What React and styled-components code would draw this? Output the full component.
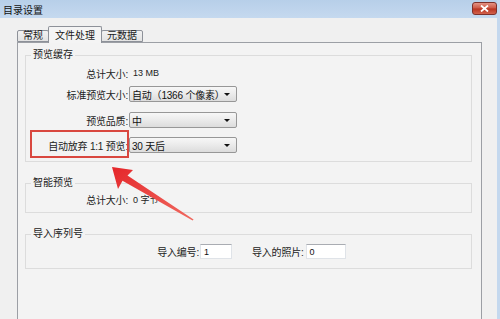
import React from "react";
import styled, { createGlobalStyle } from "styled-components";

const GlobalStyle = createGlobalStyle`
  html, body {
    margin: 0;
    padding: 0;
    background: #f0f0f0;
  }
  * {
    box-sizing: border-box;
  }
`;

const FONT = `"Liberation Sans", "Noto Sans CJK SC", sans-serif`;

export default function App() {
  return (
    <>
      <GlobalStyle />
      <Window>
        <TitleBar>
          <Title>目录设置</Title>
          <CloseButton>
            <svg width="9" height="7" viewBox="0 0 9 7">
              <path d="M1 0.5 L8 6.5 M8 0.5 L1 6.5" stroke="#fff" strokeWidth="1.8" />
            </svg>
          </CloseButton>
        </TitleBar>
        <Body>
          <TabRow>
            <Tab>常规</Tab>
            <Tab $active>文件处理</Tab>
            <Tab>元数据</Tab>
          </TabRow>
          <Panel>
            <Group>
              <Legend>预览缓存</Legend>
              <Row $top={3}>
                <Label>总计大小:</Label>
                <Value>13 MB</Value>
              </Row>
              <Row $top={5}>
                <Label>标准预览大小:</Label>
                <Select>自动（1366 个像素）</Select>
              </Row>
              <Row $top={10}>
                <Label>预览品质:</Label>
                <Select>中</Select>
              </Row>
              <Row $top={9}>
                <Label>自动放弃 1:1 预览:</Label>
                <Select>30 天后</Select>
              </Row>
            </Group>

            <Group $bottom={6}>
              <Legend>智能预览</Legend>
              <Row $top={2} $h={14}>
                <Label>总计大小:</Label>
                <Value>0 字节</Value>
              </Row>
            </Group>

            <Group $bottom={9}>
              <Legend>导入序列号</Legend>
              <ImportRow>
                <Label>导入编号:</Label>
                <TextInput $w={32}>1</TextInput>
                <SmallLabel>导入的照片:</SmallLabel>
                <TextInput $w={40}>0</TextInput>
              </ImportRow>
            </Group>
          </Panel>
        </Body>

        <Highlight />
        <Arrow viewBox="0 0 500 319" width="500" height="319">
          <defs>
            <linearGradient id="arrowFill" x1="0" y1="0" x2="1" y2="1">
              <stop offset="0" stopColor="#e5262a" />
              <stop offset="1" stopColor="#f06a60" />
            </linearGradient>
          </defs>
          <polygon
            points="112,167 133,170 127.5,175.5 193.6,219.4 192.6,220.6 122.5,180.8 118,189"
            fill="url(#arrowFill)"
          />
        </Arrow>
      </Window>
    </>
  );
}

const Window = styled.div`
  position: relative;
  width: 500px;
  height: 319px;
  display: flex;
  flex-direction: column;
  overflow: hidden;
  background: #f0f0f0;
  border-right: 3px solid #c4d8ee;
  font-family: ${FONT};
  font-size: 10px;
  color: #1a1a1a;
`;

const TitleBar = styled.div`
  height: 18px;
  flex: none;
  display: flex;
  align-items: center;
  justify-content: space-between;
  padding: 0 0 0 3px;
  background: linear-gradient(#b7cfe9, #c5d9ef);
`;

const Title = styled.span`
  font-size: 10px;
  color: #111;
`;

const CloseButton = styled.div`
  flex: none;
  width: 25px;
  height: 13px;
  margin-top: -1px;
  display: flex;
  align-items: center;
  justify-content: center;
  border: 1px solid #7e302a;
  border-radius: 3px;
  background: linear-gradient(#e49384, #cc5643 48%, #b8321f 52%, #d2624c);
`;

const Body = styled.div`
  flex: 1;
  display: flex;
  flex-direction: column;
  padding: 8px 15px 0 17px;
`;

const TabRow = styled.div`
  height: 16px;
  display: flex;
  align-items: flex-end;
  position: relative;
  z-index: 1;
`;

const Tab = styled.div`
  height: ${(p) => (p.$active ? "17px" : "12px")};
  margin-bottom: ${(p) => (p.$active ? "-1px" : "0")};
  margin-left: ${(p) => (p.$active ? "-1px" : "0")};
  margin-right: ${(p) => (p.$active ? "-1px" : "0")};
  padding: ${(p) => (p.$active ? "2px 6px 0" : "0 5px")};
  display: flex;
  align-items: center;
  border: 1px solid #8d9199;
  border-bottom: ${(p) => (p.$active ? "none" : "1px solid #8d9199")};
  border-radius: 2px 2px 0 0;
  background: ${(p) =>
    p.$active ? "#f4f4f4" : "linear-gradient(#f2f2f2, #e3e3e3)"};
  font-size: 10px;
  line-height: 1;
  white-space: nowrap;
  position: relative;
  z-index: ${(p) => (p.$active ? 2 : 1)};
`;

const Panel = styled.div`
  flex: 1;
  display: flex;
  flex-direction: column;
  gap: 14px;
  padding: 5px 9px 0 7px;
  border: 1px solid #9c9fa5;
  border-bottom: none;
  background: #f3f3f3;
`;

const Group = styled.fieldset`
  margin: 0;
  padding: 0 8px ${(p) => p.$bottom ?? 8}px 5px;
  border: 1px solid #dcdcdc;
  border-radius: 0;
  display: flex;
  flex-direction: column;
  min-width: 0;
`;

const Legend = styled.legend`
  padding: 0 2px;
  font-size: 10px;
  line-height: 14px;
  color: #222;
`;

const Row = styled.div`
  margin-top: ${(p) => p.$top}px;
  height: ${(p) => p.$h ?? 16}px;
  display: grid;
  grid-template-columns: 97px auto;
  column-gap: 1px;
  align-items: center;
`;

const Label = styled.span`
  justify-self: end;
  text-align: right;
  white-space: nowrap;
  font-size: 10px;
  letter-spacing: -0.2px;
  color: #222;
`;

const SmallLabel = styled(Label)`
  margin-left: 20px;
  margin-right: 1px;
`;

const Value = styled.span`
  padding-left: 4px;
  font-size: 9px;
  color: #222;
`;

const Select = styled.div`
  position: relative;
  width: 108px;
  height: 16px;
  display: flex;
  align-items: center;
  padding-left: 2px;
  border: 1px solid #979797;
  border-radius: 2px;
  background: linear-gradient(#f7f7f7, #ececec 45%, #dcdcdc);
  font-size: 10px;
  letter-spacing: -0.2px;
  white-space: nowrap;
  color: #111;

  &::after {
    content: "";
    position: absolute;
    right: 6px;
    top: 6px;
    border-left: 3px solid transparent;
    border-right: 3px solid transparent;
    border-top: 3px solid #111;
  }
`;

const ImportRow = styled.div`
  margin-top: 3px;
  height: 15px;
  display: grid;
  grid-template-columns: 168px auto auto auto;
  justify-content: start;
  align-items: center;
`;

const TextInput = styled.div`
  width: ${(p) => p.$w}px;
  height: 15px;
  display: flex;
  align-items: center;
  padding-left: 3px;
  margin-left: 1px;
  background: #fff;
  border: 1px solid #dfe3e8;
  border-top-color: #a9acb2;
  font-size: 9px;
  color: #111;
`;

const Highlight = styled.div`
  position: absolute;
  left: 30px;
  top: 130px;
  width: 99px;
  height: 28px;
  border: 2px solid #d9473f;
  pointer-events: none;
`;

const Arrow = styled.svg`
  position: absolute;
  left: 0;
  top: 0;
  pointer-events: none;
`;
